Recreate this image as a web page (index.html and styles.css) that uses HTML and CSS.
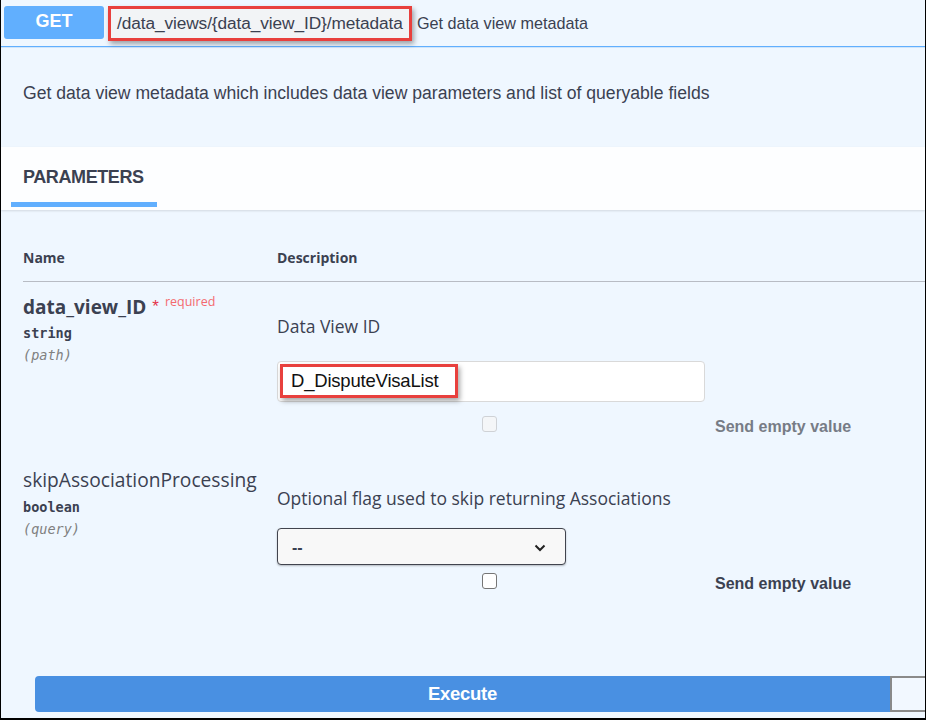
FILE: index.html
```html
<!DOCTYPE html>
<html>
<head>
<meta charset="utf-8">
<link rel="stylesheet" href="styles.css">
</head>
<body>
<div class="frame">
  <div class="summary">
    <span class="method">GET</span>
    <span class="path">/data_views/{data_view_ID}/metadata</span>
    <span class="summary-text">Get data view metadata</span>
  </div>
  <div class="desc">Get data view metadata which includes data view parameters and list of queryable fields</div>
  <div class="tab-header">
    <div class="tab">PARAMETERS</div>
  </div>
  <div class="params">
    <div class="thead">
      <div class="col-name">Name</div>
      <div class="col-desc">Description</div>
    </div>
    <div class="row row1">
      <div class="col-name">
        <div class="pname"><span class="pname-bold">data_view_ID</span> <span class="star">*</span><span class="req">required</span></div>
        <div class="ptype">string</div>
        <div class="pin">(path)</div>
      </div>
      <div class="col-desc">
        <div class="ptext">Data View ID</div>
        <div class="input"><span class="hl">D_DisputeVisaList</span></div>
        <div class="empty-row">
          <span class="cb cb-disabled"></span>
          <span class="send send-disabled">Send empty value</span>
        </div>
      </div>
    </div>
    <div class="row row2">
      <div class="col-name">
        <div class="pname2">skipAssociationProcessing</div>
        <div class="ptype">boolean</div>
        <div class="pin">(query)</div>
      </div>
      <div class="col-desc">
        <div class="ptext">Optional flag used to skip returning Associations</div>
        <div class="select"><span>--</span>
          <svg class="chev" width="12" height="8" viewBox="0 0 12 8"><path d="M1.5 1.5 L6 6 L10.5 1.5" fill="none" stroke="#222" stroke-width="2"/></svg>
        </div>
        <div class="empty-row">
          <span class="cb"></span>
          <span class="send">Send empty value</span>
        </div>
      </div>
    </div>
  </div>
  <div class="exec-row">
    <div class="btn-exec">Execute</div>
    <div class="btn-clear"></div>
  </div>
</div>
</body>
</html>
```
FILE: styles.css
```css
* { box-sizing: border-box; }
html, body { margin: 0; padding: 0; }
body { width: 926px; height: 720px; overflow: hidden; background: #fff; }
.frame {
  width: 926px; height: 720px;
  background: #eff7ff;
  border-left: 1px solid #000;
  border-right: 1px solid #000;
  border-bottom: 2px solid #000;
  font-family: "Liberation Sans", Arial, sans-serif;
  color: #3b4151;
  overflow: hidden;
}
.summary {
  height: 47px;
  display: flex;
  align-items: flex-start;
  padding: 6px 0 0 3px;
  border-bottom: 1px solid #61affe;
  box-shadow: 0 1px 0 #cfe5fb;
}
.method {
  width: 100px; height: 33px;
  background: #61affe;
  border-radius: 3px;
  color: #fff;
  font-weight: bold;
  font-size: 18px;
  display: flex; align-items: center; justify-content: center;
  padding-bottom: 2px;
}
.path {
  margin-left: 4px;
  height: 35px;
  width: 304px;
  border: 3px solid #e8403d;
  box-shadow: 2px 3px 5px rgba(0,0,0,0.35);
  background: #f2f4f6;
  font-size: 17.3px;
  color: #3b4151;
  display: flex; align-items: center;
  padding-left: 6px;
  letter-spacing: -0.1px;
}
.summary-text {
  margin-left: 5px;
  font-size: 16.2px;
  color: #3b4151;
  height: 35px;
  display: flex; align-items: center;
}
.desc {
  height: 100px;
  padding: 36px 0 0 22px;
  font-size: 17.6px;
  color: #3b4151;
}
.tab-header {
  height: 63px;
  background: rgba(255,255,255,0.85);
  box-shadow: 0 1px 2px rgba(0,0,0,0.12);
  padding-left: 10px;
  display: flex;
  align-items: flex-end;
}
.tab {
  width: 146px;
  height: 100%;
  padding: 23px 0 0 12px;
  border-bottom: 5px solid #61affe;
  font-weight: bold;
  font-size: 18px;
  letter-spacing: -0.4px;
  color: #3b4151;
  margin-bottom: 3px;
}
.params { padding-left: 22px; }
.thead {
  display: flex;
  height: 72px;
  padding-top: 38px;
  border-bottom: 1px solid #b8bcc4;
  font-family: "Open Sans", sans-serif;
  font-weight: bold;
  font-size: 14px;
}
.col-name { width: 254px; flex: none; }
.col-desc { flex: 1; }
.row { display: flex; }
.row1 { padding-top: 13px; height: 180px; }
.pname { display: flex; align-items: flex-start; height: 24px; }
.pname-bold {
  font-family: "Open Sans", sans-serif;
  font-weight: bold; font-size: 19px; color: #3b4151;
  line-height: 24px;
}
.star { color: #e4344b; font-size: 17px; margin-left: 6px; line-height: 24px; }
.req { color: #f46a6f; font-size: 12.5px; font-family: "Open Sans", sans-serif; margin-left: 6px; line-height: 14px; }
.ptype {
  font-family: "DejaVu Sans Mono", monospace;
  font-weight: bold; font-size: 13.5px; color: #3b4151;
  margin-top: 3px; line-height: 22px;
}
.pin {
  font-family: "DejaVu Sans Mono", monospace;
  font-style: italic; font-size: 13.5px; color: #808080;
  line-height: 23px;
}
.pname2 {
  font-family: "Open Sans", sans-serif;
  font-size: 19.2px; color: #3b4151; line-height: 26px;
}
.ptext {
  font-family: "Open Sans", sans-serif;
  font-size: 17.5px; line-height: 24px; color: #3b4151;
}
.row1 .ptext { margin-top: 19px; }
.input {
  margin-top: 23px;
  width: 428px; height: 41px;
  background: #fff;
  border: 1px solid #d9d9d9;
  border-radius: 4px;
  padding: 2px 0 0 2px;
}
.hl {
  display: flex; align-items: center;
  width: 178px; height: 34px;
  border: 3px solid #e8403d;
  box-shadow: 2px 3px 5px rgba(0,0,0,0.35);
  padding-left: 8px;
  font-size: 18.5px;
  letter-spacing: -0.2px;
  color: #111;
}
.empty-row { display: flex; align-items: center; margin-top: 13px; height: 18px; }
.cb {
  width: 15px; height: 16px;
  margin-left: 205px;
  border: 1px solid #767676;
  border-radius: 3px;
  background: #fff;
}
.cb-disabled { border-color: #cfd2d6; background: #f4f6f8; }
.send {
  margin-left: 218px;
  margin-top: 6px;
  font-weight: bold; font-size: 16px;
  color: #3b4151;
}
.send-disabled { color: #777c86; }
.row2 { height: 214px; padding-top: 5px; }
.row2 .ptext { margin-top: 19px; }
.select {
  margin-top: 18px;
  width: 289px; height: 37px;
  border: 1px solid #41444e;
  border-radius: 4px;
  background: #f8f8f8;
  box-shadow: 0 1px 2px rgba(0,0,0,0.25);
  display: flex; align-items: center; justify-content: space-between;
  padding: 2px 19px 0 14px;
  font-size: 16px; font-weight: bold; color: #3b4151;
}
.row2 .empty-row { margin-top: 7px; }
.row2 .send { margin-top: 6px; }
.exec-row { display: flex; padding-left: 34px; }
.btn-exec {
  width: 855px; height: 36px;
  background: #4990e2;
  border-radius: 4px 0 0 4px;
  color: #fff;
  font-weight: bold; font-size: 18.5px;
  display: flex; align-items: center; justify-content: center;
  letter-spacing: -0.3px;
}
.btn-clear {
  flex: 1; height: 36px;
  border: 2px solid #8a8a8a;
  border-right: none;
  background: #f2f8ff;
}
```
